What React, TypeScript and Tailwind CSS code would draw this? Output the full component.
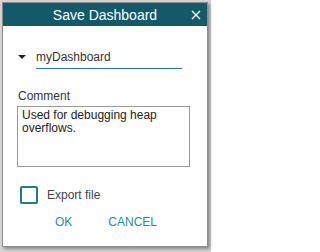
import { useState } from 'react';

export default function App() {
  const [exportFile, setExportFile] = useState(false);
  const [comment, setComment] = useState('Used for debugging heap overflows.');

  return (
    <div className="w-[211px] h-[252px] bg-[#d4d4d4] pt-[2px] pl-[2px] font-['Liberation_Sans',Arial,sans-serif]">
      <div className="w-[206px] h-[245px] bg-white border border-[#8c8c8c] shadow-[2px_2px_3px_rgba(0,0,0,0.35)] flex flex-col">
        {/* Header */}
        <div className="relative h-[23px] bg-[#14596a] flex items-center justify-center">
          <span className="text-white text-[14px] leading-none">Save Dashboard</span>
          <button className="absolute right-[6px] top-[6px] w-[11px] h-[11px] flex items-center justify-center">
            <svg width="10" height="10" viewBox="0 0 10 10">
              <path d="M1 1L9 9M9 1L1 9" stroke="white" strokeWidth="1.4" />
            </svg>
          </button>
        </div>

        {/* Body */}
        <div className="flex flex-col pl-[14px]">
          {/* Name row */}
          <div className="flex items-center mt-[22px]">
            <svg width="8" height="4" viewBox="0 0 8 4" className="ml-[1px] mb-[4px]">
              <path d="M0 0H8L4 4Z" fill="#222" />
            </svg>
            <div className="ml-[10px] w-[146px] h-[21px] border-b-[1.5px] border-[#2b7d8c] text-[12px] leading-[16px] text-[#333] pt-[1px]">
              myDashboard
            </div>
          </div>

          {/* Comment */}
          <div className="mt-[20px] text-[12px] leading-[14px] text-[#333] ml-[1px]">Comment</div>
          <textarea
            value={comment}
            onChange={(e) => setComment(e.target.value)}
            className="mt-[3px] w-[173px] h-[61px] border border-[#9a9a9a] resize-none outline-none pl-[4px] pr-[2px] pt-[2px] text-[12px] leading-[13px] text-[#222] font-['Liberation_Sans',Arial,sans-serif]"
          />

          {/* Export checkbox */}
          <label className="flex items-center mt-[19px] ml-[3px] cursor-pointer">
            <input
              type="checkbox"
              checked={exportFile}
              onChange={() => setExportFile(!exportFile)}
              className="appearance-none w-[18px] h-[18px] border-2 border-[#1f7d8b] rounded-[2px] bg-white"
            />
            <span className="ml-[9px] text-[12px] leading-[14px] text-[#444]">Export file</span>
          </label>

          {/* Actions */}
          <div className="flex items-center mt-[11px] text-[12px] leading-[14px] text-[#2a8a98]">
            <button className="ml-[38px]">OK</button>
            <button className="ml-[36px]">CANCEL</button>
          </div>
        </div>
      </div>
    </div>
  );
}
